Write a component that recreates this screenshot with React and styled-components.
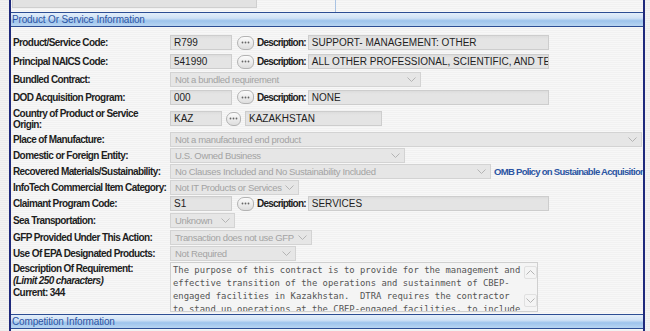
import styled, { createGlobalStyle } from "styled-components";

const GlobalStyle = createGlobalStyle`
  html, body {
    margin: 0;
    padding: 0;
  }
  body {
    font-family: "Liberation Sans", Arial, sans-serif;
    background: repeating-linear-gradient(#ececec 0 1px, #f3f3f3 1px 2px);
    overflow: hidden;
  }
`;

const Panel = styled.div`
  margin-left: 9px;
  width: 632px;
  height: 331px;
  border-left: 2px solid #1f2a7c;
  border-right: 2px solid #1f2a7c;
  background: repeating-linear-gradient(#f1f1f1 0 1px, #f7f7f7 1px 2px);
  overflow: hidden;
`;

const Stub = styled.div`
  height: 12px;
  display: flex;
`;

const StubCell = styled.div`
  width: 323px;
  border-right: 1px solid #a9c3e3;
  padding-left: 1px;
`;

const StubField = styled.div`
  width: 243px;
  height: 7px;
  background: #e2e2e2;
  border: 1px solid #cfcfcf;
  border-top: none;
`;

const SectionHeader = styled.div`
  height: 13px;
  border-top: 1px solid #2c4d93;
  border-bottom: 1px solid #2c4d93;
  background: linear-gradient(#e3eefa 0%, #cfe1f5 40%, #9ec4ec 60%, #b8d5f2 100%);
  color: #2c54a3;
  font-size: 10px;
  letter-spacing: -0.15px;
  line-height: 13px;
  padding-left: 1px;
  white-space: nowrap;
`;

const Form = styled.div`
  padding: 6px 0 0 2px;
`;

const Row = styled.div`
  display: grid;
  grid-template-columns: 157px 1fr;
  align-items: ${(p) => (p.$top ? "start" : "center")};
  height: ${(p) => p.$h}px;
`;

const Label = styled.div`
  font-size: 10px;
  font-weight: bold;
  letter-spacing: -0.6px;
  color: #1e1e1e;
  line-height: 11px;
  white-space: nowrap;
`;

const LabelBlock = styled(Label)`
  line-height: 12px;
  padding-top: 1px;
  em {
    display: block;
  }
`;

const Field = styled.div`
  display: flex;
  align-items: center;
`;

const TextBox = styled.div`
  box-sizing: border-box;
  width: ${(p) => p.$w}px;
  height: 15px;
  background: linear-gradient(#dcdcdc, #e4e4e4 3px);
  border: 1px solid #cdcdcd;
  font-size: 10px;
  line-height: 13px;
  color: #1e1e1e;
  padding-left: 3px;
  white-space: nowrap;
  overflow: hidden;
`;

const DotsButton = styled.div`
  box-sizing: border-box;
  width: ${(p) => p.$w}px;
  height: 14px;
  margin: 0 ${(p) => p.$gap}px 0 ${(p) => p.$lead}px;
  border: 1px solid #b3b3b3;
  border-radius: 7px 6px 6px 7px;
  background: linear-gradient(#fbfbfb, #dedede);
  display: flex;
  align-items: center;
  justify-content: center;
`;

const DescLabel = styled.span`
  font-size: 10px;
  font-weight: bold;
  letter-spacing: -0.8px;
  color: #1e1e1e;
  margin-right: 2px;
`;

const Select = styled.div`
  box-sizing: border-box;
  width: ${(p) => p.$w}px;
  height: 15px;
  background: #e6e6e6;
  border: 1px solid #d3d3d3;
  color: #a3a3a3;
  font-size: 9.5px;
  letter-spacing: -0.35px;
  line-height: 13px;
  padding: 0 0 0 4px;
  display: flex;
  align-items: center;
  justify-content: space-between;
  white-space: nowrap;
  overflow: hidden;
  svg {
    flex: none;
    margin: 0 4px 0 3px;
  }
`;

const PolicyLink = styled.a`
  font-size: 9.5px;
  font-weight: bold;
  letter-spacing: -0.7px;
  color: #2b55a3;
  text-decoration: none;
  margin-left: 3px;
  white-space: nowrap;
`;

const TextArea = styled.div`
  box-sizing: border-box;
  width: 368px;
  height: 50px;
  border: 1px solid #cfcfcf;
  background: #f4f4f4;
  display: flex;
  overflow: hidden;
`;

const AreaText = styled.div`
  flex: 1;
  font-family: "DejaVu Sans Mono", "Liberation Mono", monospace;
  font-size: 8.9px;
  line-height: 13px;
  color: #555;
  padding: 1px 0 0 2px;
  white-space: pre;
  overflow: hidden;
`;

const ScrollTrack = styled.div`
  width: 14px;
  display: flex;
  flex-direction: column;
  justify-content: space-between;
  align-items: center;
  padding: 3px 0 4px;
`;

const ScrollArrow = styled.div`
  width: 11px;
  height: 11px;
  border: 1px solid #e0e0e0;
  border-radius: 2px;
  display: flex;
  align-items: center;
  justify-content: center;
`;

const Chevron = ({ up }) => (
  <svg width="9" height="5" viewBox="0 0 9 5">
    <polyline
      points={up ? "0.5,4.5 4.5,0.5 8.5,4.5" : "0.5,0.5 4.5,4.5 8.5,0.5"}
      fill="none"
      stroke="#b4b4b4"
      strokeWidth="1"
    />
  </svg>
);

const Dots = () => (
  <svg width="9" height="3" viewBox="0 0 9 3">
    <circle cx="1.5" cy="1.5" r="0.9" fill="#666" />
    <circle cx="4.5" cy="1.5" r="0.9" fill="#666" />
    <circle cx="7.5" cy="1.5" r="0.9" fill="#666" />
  </svg>
);

const CodeRow = ({ label, code, desc, h }) => (
  <Row $h={h}>
    <Label>{label}</Label>
    <Field>
      <TextBox $w={62}>{code}</TextBox>
      <DotsButton $w={17} $lead={5} $gap={3}>
        <Dots />
      </DotsButton>
      <DescLabel>Description:</DescLabel>
      <TextBox $w={241}>{desc}</TextBox>
    </Field>
  </Row>
);

const SelectRow = ({ label, value, w, h, children }) => (
  <Row $h={h}>
    <Label>{label}</Label>
    <Field>
      <Select $w={w}>
        <span>{value}</span>
        <Chevron />
      </Select>
      {children}
    </Field>
  </Row>
);

const requirement = [
  "The purpose of this contract is to provide for the management and",
  "effective transition of the operations and sustainment of CBEP-",
  "engaged facilities in Kazakhstan.  DTRA requires the contractor",
  "to stand up operations at the CBEP-engaged facilities, to include",
].join("\n");

const App = () => (
  <>
    <GlobalStyle />
    <Panel>
      <Stub>
        <StubCell>
          <StubField />
        </StubCell>
      </Stub>
      <SectionHeader>Product Or Service Information</SectionHeader>
      <Form>
        <CodeRow label="Product/Service Code:" code="R799" desc="SUPPORT- MANAGEMENT: OTHER" h={19} />
        <CodeRow
          label="Principal NAICS Code:"
          code="541990"
          desc="ALL OTHER PROFESSIONAL, SCIENTIFIC, AND TECHNICAL SERVICES"
          h={19}
        />
        <SelectRow label="Bundled Contract:" value="Not a bundled requirement" w={251} h={17} />
        <CodeRow label="DOD Acquisition Program:" code="000" desc="NONE" h={18} />
        <Row $h={25}>
          <Label>
            Country of Product or Service
            <br />
            Origin:
          </Label>
          <Field>
            <TextBox $w={52}>KAZ</TextBox>
            <DotsButton $w={15} $lead={4} $gap={4}>
              <Dots />
            </DotsButton>
            <TextBox $w={137}>KAZAKHSTAN</TextBox>
          </Field>
        </Row>
        <SelectRow label="Place of Manufacture:" value="Not a manufactured end product" w={472} h={16} />
        <SelectRow label="Domestic or Foreign Entity:" value="U.S. Owned Business" w={235} h={16} />
        <SelectRow
          label="Recovered Materials/Sustainability:"
          value="No Clauses Included and No Sustainability Included"
          w={321}
          h={16}
        >
          <PolicyLink href="#">OMB Policy on Sustainable Acquisition</PolicyLink>
        </SelectRow>
        <SelectRow label="InfoTech Commercial Item Category:" value="Not IT Products or Services" w={129} h={16} />
        <CodeRow label="Claimant Program Code:" code="S1" desc="SERVICES" h={17} />
        <SelectRow label="Sea Transportation:" value="Unknown" w={65} h={17} />
        <SelectRow label="GFP Provided Under This Action:" value="Transaction does not use GFP" w={142} h={16} />
        <SelectRow label="Use Of EPA Designated Products:" value="Not Required" w={126} h={17} />
        <Row $h={52} $top>
          <LabelBlock>
            Description Of Requirement:
            <em>(Limit 250 characters)</em>
            Current: 344
          </LabelBlock>
          <TextArea>
            <AreaText>{requirement}</AreaText>
            <ScrollTrack>
              <ScrollArrow>
                <Chevron up />
              </ScrollArrow>
              <ScrollArrow>
                <Chevron />
              </ScrollArrow>
            </ScrollTrack>
          </TextArea>
        </Row>
      </Form>
      <SectionHeader>Competition Information</SectionHeader>
    </Panel>
  </>
);

export default App;
